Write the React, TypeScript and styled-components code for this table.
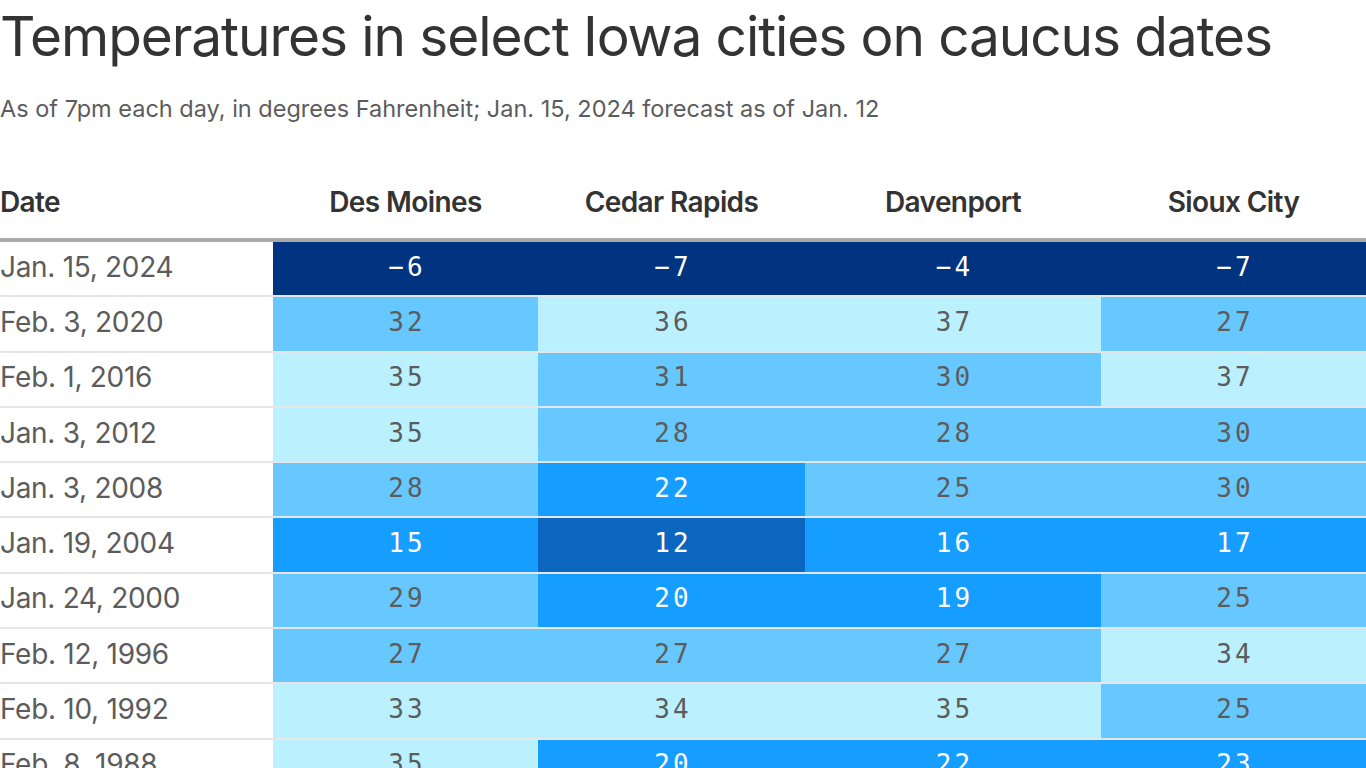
import React from 'react'
import styled, { createGlobalStyle } from 'styled-components'

interface Row {
    date: string,
    temps: number[]
}

const rows: Row[] = [
    { date: 'Jan. 15, 2024', temps: [-6, -7, -4, -7] },
    { date: 'Feb. 3, 2020', temps: [32, 36, 37, 27] },
    { date: 'Feb. 1, 2016', temps: [35, 31, 30, 37] },
    { date: 'Jan. 3, 2012', temps: [35, 28, 28, 30] },
    { date: 'Jan. 3, 2008', temps: [28, 22, 25, 30] },
    { date: 'Jan. 19, 2004', temps: [15, 12, 16, 17] },
    { date: 'Jan. 24, 2000', temps: [29, 20, 19, 25] },
    { date: 'Feb. 12, 1996', temps: [27, 27, 27, 34] },
    { date: 'Feb. 10, 1992', temps: [33, 34, 35, 25] },
    { date: 'Feb. 8, 1988', temps: [35, 20, 22, 23] },
]

const cities = ['Des Moines', 'Cedar Rapids', 'Davenport', 'Sioux City']

// colour bands: below zero, then warmer steps
function shade(t: number) {
    if (t < 0) return { bg: '#003380', fg: '#ffffff' }
    if (t <= 14) return { bg: '#0b66bf', fg: '#ffffff' }
    if (t <= 24) return { bg: '#159dff', fg: '#ffffff' }
    if (t <= 32) return { bg: '#66c8ff', fg: '#5c5c5c' }
    return { bg: '#bbf1ff', fg: '#5c5c5c' }
}

const App: React.FC = () => {
    return (
        <React.Fragment>
            <GlobalStyle />
            <Page>
                <Title>Temperatures in select Iowa cities on caucus dates</Title>
                <Subtitle>As of 7pm each day, in degrees Fahrenheit; Jan. 15, 2024 forecast as of Jan. 12</Subtitle>
                <Table>
                    <HeadRow>
                        <HeadCell align="left">Date</HeadCell>
                        {cities.map(c => <HeadCell key={c} align="center">{c}</HeadCell>)}
                    </HeadRow>
                    {rows.map(r => (
                        <BodyRow key={r.date}>
                            <DateCell>{r.date}</DateCell>
                            {r.temps.map((t, i) => {
                                const s = shade(t)
                                return (
                                    <TempCell key={i} bg={s.bg} fg={s.fg}>
                                        {t < 0 ? '\u2212' + Math.abs(t) : t}
                                    </TempCell>
                                )
                            })}
                        </BodyRow>
                    ))}
                </Table>
            </Page>
        </React.Fragment>
    )
}

const GlobalStyle = createGlobalStyle`
    html, body {
        margin: 0;
        background: #ffffff;
        overflow: hidden;
    }
`

const Page = styled.div`
    font-family: Inter, "Noto Sans", sans-serif;
    color: #333333;
    width: 1366px;
`

const Title = styled.h1`
    margin: 0;
    padding-top: 4px;
    font-size: 55px;
    font-weight: 400;
    line-height: 64px;
    letter-spacing: -1.1px;
    color: #333333;
`

const Subtitle = styled.p`
    margin: 24px 0 0;
    font-size: 23.5px;
    line-height: 34px;
    color: #5c5c5c;
    letter-spacing: 0;
`

const Table = styled.div`
    margin-top: 40px;
    display: flex;
    flex-direction: column;
`

const grid = `
    display: grid;
    grid-template-columns: 273px 265px 267px 296px 265px;
`

const HeadRow = styled.div`
    ${grid}
    height: 72px;
    border-bottom: 4px solid #aaaaaa;
`

const HeadCell = styled.div<{ align: 'left' | 'center' }>`
    display: flex;
    align-items: center;
    justify-content: ${p => (p.align === 'left' ? 'flex-start' : 'center')};
    font-size: 28px;
    font-weight: 600;
    letter-spacing: -0.6px;
    color: #333333;
`

const BodyRow = styled.div`
    ${grid}
    height: 53.3px;
    border-bottom: 2px solid #e6e6e6;
`

const DateCell = styled.div`
    display: flex;
    align-items: center;
    padding-bottom: 4px;
    font-size: 28px;
    letter-spacing: -0.3px;
    color: #5c5c5c;
`

const TempCell = styled.div<{ bg: string, fg: string }>`
    display: flex;
    align-items: center;
    justify-content: center;
    padding: 0 0 4px 3px;
    background: ${p => p.bg};
    color: ${p => p.fg};
    font-family: "DejaVu Sans Mono", "Liberation Mono", monospace;
    font-size: 26px;
    letter-spacing: 3px;
`

export default App
